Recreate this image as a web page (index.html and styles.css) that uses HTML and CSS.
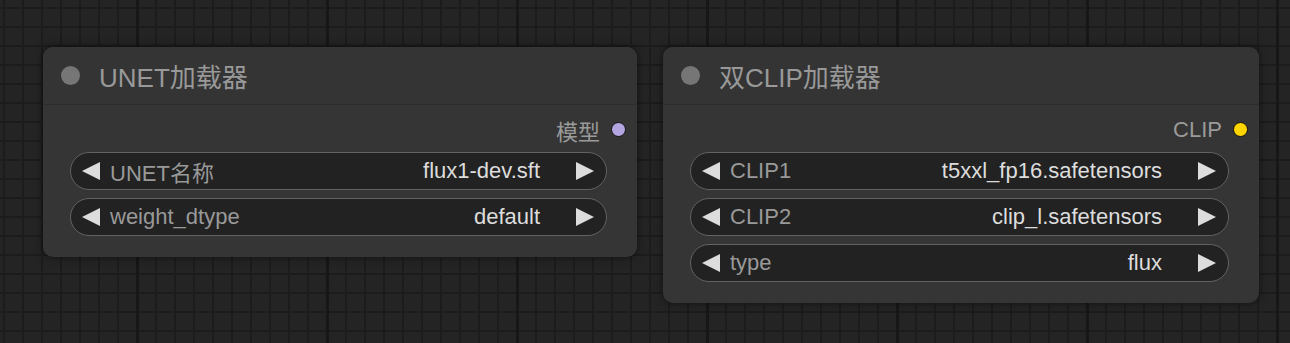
FILE: index.html
```html
<!DOCTYPE html>
<html lang="zh">
<head>
  <meta charset="UTF-8"/>
  <title>Nodes</title>
  <link rel="stylesheet" href="styles.css">
</head>
<body>
<div class="canvas">

  <!-- UNET loader -->
  <div class="node">
    <div class="node-title"><span class="dot"></span><span>UNET加载器</span></div>
    <div class="node-body">
      <div class="output"><span>模型</span><span class="slot slot-model"></span></div>
      <div class="widget">
        <span class="arrow left"></span><span class="label">UNET名称</span>
        <span class="value">flux1-dev.sft</span><span class="arrow right"></span>
      </div>
      <div class="widget">
        <span class="arrow left"></span><span class="label">weight_dtype</span>
        <span class="value">default</span><span class="arrow right"></span>
      </div>
    </div>
  </div>

  <!-- dual CLIP loader -->
  <div class="node">
    <div class="node-title"><span class="dot"></span><span>双CLIP加载器</span></div>
    <div class="node-body">
      <div class="output"><span>CLIP</span><span class="slot slot-clip"></span></div>
      <div class="widget">
        <span class="arrow left"></span><span class="label">CLIP1</span>
        <span class="value">t5xxl_fp16.safetensors</span><span class="arrow right"></span>
      </div>
      <div class="widget">
        <span class="arrow left"></span><span class="label">CLIP2</span>
        <span class="value">clip_l.safetensors</span><span class="arrow right"></span>
      </div>
      <div class="widget">
        <span class="arrow left"></span><span class="label">type</span>
        <span class="value">flux</span><span class="arrow right"></span>
      </div>
    </div>
  </div>

</div>
</body>
</html>
```

FILE: styles.css
```css
*{box-sizing:border-box}
html,body{margin:0;height:100%}
body{
  font-family:"Liberation Sans","Noto Sans CJK SC",sans-serif;
  background-color:#242424;
  background-image:
    linear-gradient(90deg,#171717 0,#171717 3px,transparent 3px),
    linear-gradient(90deg,#1c1c1c 0,#1c1c1c 2px,transparent 2px),
    linear-gradient(180deg,#1c1c1c 0,#1c1c1c 2px,transparent 2px);
  background-size:190px 100%,19px 19px,19px 19px;
  background-position:136px 0,3px 0,0 7px;
  overflow:hidden;
}
.canvas{display:flex;align-items:flex-start;gap:26px;padding:47px 0 0 43px}

.node{background:#353535;border-radius:10px;box-shadow:0 0 8px rgba(0,0,0,.55);overflow:hidden}
.node:first-child{width:594px}
.node:last-child{width:596px}
.node-title{height:58px;display:flex;align-items:center;gap:19px;padding-left:18px;background:#343434;border-bottom:1px solid #2d2d2d;color:#999;font-size:26px}
.dot{width:19px;height:19px;border-radius:50%;background:#767676}

.node-body{padding:0 30px 21px 27px}
.output{height:47px;display:flex;align-items:center;justify-content:flex-end;gap:11px;margin-right:-19px;padding-top:2px;color:#9a9a9a;font-size:22px}
.slot{width:15px;height:15px;border-radius:50%;border:1.5px solid #111}
.slot-model{background:#b3a6e0}
.slot-clip{background:#ffd500}

.widget{height:38px;display:flex;align-items:center;padding:0 12px 0 11px;border:1.5px solid #626262;border-radius:19px;background:#222;font-size:22px;margin-bottom:8px}
.widget:last-child{margin-bottom:0}
.label{color:#999;margin-left:10px;flex:1}
.value{color:#ddd;margin-right:36px}
.arrow{width:18px;height:18px;background:#ddd}
.arrow.left{clip-path:polygon(0 50%,100% 0,100% 100%)}
.arrow.right{clip-path:polygon(0 0,100% 50%,0 100%)}
```
